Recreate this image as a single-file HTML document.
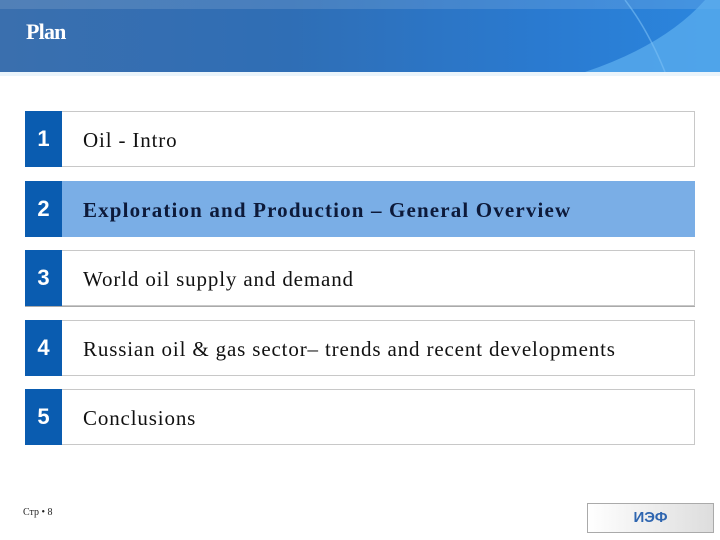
<!DOCTYPE html>
<html><head><style>
body{margin:0;width:720px;height:540px;background:#fff;position:relative;overflow:hidden;font-family:"Liberation Serif",serif}
.hdr{position:absolute;left:0;top:0;width:720px;height:72px;background:linear-gradient(90deg,#3a6fae 0%,#2f6eb5 40%,#2a7ad0 75%,#2b86de 100%);overflow:hidden}
.hdr:before{content:"";position:absolute;left:0;top:0;width:720px;height:9px;background:rgba(255,255,255,0.12)}
.hdr h1{position:absolute;left:26px;top:19px;margin:0;font-size:22px;color:#fff;font-weight:bold;letter-spacing:-0.8px}
.row{position:absolute;left:25px;width:670px;height:56px;border:1px solid #c8c8c8;box-sizing:border-box;background:#fff}
.num{position:absolute;left:-1px;top:-1px;width:37px;height:56px;background:#0a5cb0;color:#fff;font:bold 22px "Liberation Sans",sans-serif;text-align:center;line-height:56px}
.t{position:absolute;left:57px;top:0;line-height:56px;font-size:21px;letter-spacing:0.85px;color:#111;white-space:nowrap}
.hl{background:#7aaee6;border-color:#7aaee6}
.hl .t{font-weight:bold;color:#0d1a3a;letter-spacing:1.15px}
</style></head><body>
<div class="hdr"><svg width="720" height="72" style="position:absolute;left:0;top:0"><path d="M585 72 Q665 45 705 0 L720 0 L720 72Z" fill="#5fb0f0" opacity="0.7"/><path d="M625 0 Q648 30 665 72" stroke="#7cc0f5" stroke-width="1.5" fill="none" opacity="0.6"/></svg><h1>Plan</h1></div>
<div style="position:absolute;left:0;top:72px;width:720px;height:4px;background:#eaf4fb"></div>
<div class="row" style="top:111px"><div class="num">1</div><div class="t">Oil - Intro</div></div>
<div class="row hl" style="top:181px"><div class="num">2</div><div class="t">Exploration and Production – General Overview</div></div>
<div class="row" style="top:250px;box-shadow:0 1px 0 #aaa"><div class="num">3</div><div class="t">World oil supply and demand</div></div>
<div class="row" style="top:320px"><div class="num">4</div><div class="t">Russian oil &amp; gas sector– trends and recent developments</div></div>
<div class="row" style="top:389px"><div class="num">5</div><div class="t">Conclusions</div></div>
<div style="position:absolute;left:23px;top:507px;font-size:10px;color:#222">Стр • 8</div>
<div style="position:absolute;left:587px;top:503px;width:127px;height:30px;border:1px solid #aaa;box-sizing:border-box;background:linear-gradient(90deg,#fff,#ddd);text-align:center;font-family:'Liberation Sans',sans-serif;font-weight:bold;font-size:15px;line-height:28px;color:#2f66b0">ИЭФ</div>
</body></html>
